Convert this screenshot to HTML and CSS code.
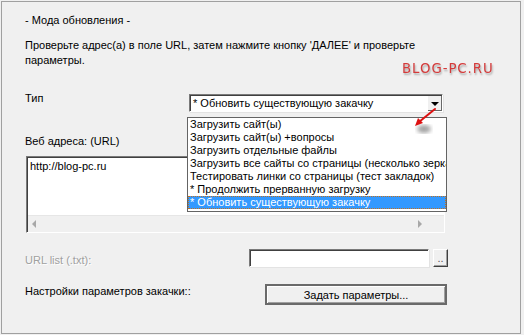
FILE: index.html
```html
<!DOCTYPE html>
<html>
<head>
	<title>Мода обновления</title>
	<link rel="stylesheet" href="styles.css">
</head>
<body>
	<div class="panel">
		<p class="title">- Мода обновления -</p>
		<p class="hint">Проверьте адрес(а) в поле URL, затем нажмите кнопку 'ДАЛЕЕ' и проверьте параметры.</p>

		<div class="row row-type">
			<span class="label">Тип</span>
			<div class="combo">
				<span class="combo-value">* Обновить существующую закачку</span>
				<span class="combo-btn"></span>
			</div>
		</div>

		<p class="label label-url">Веб адреса: (URL)</p>
		<div class="urls">
			<div class="urls-text">http://blog-pc.ru</div>
			<div class="hscroll">
				<span class="arr arr-left"></span>
				<span class="arr arr-right"></span>
			</div>
		</div>

		<div class="row row-list">
			<span class="label disabled">URL list (.txt):</span>
			<div class="field"></div>
			<button class="browse">..</button>
		</div>

		<div class="row row-settings">
			<span class="label">Настройки параметров закачки::</span>
			<button class="settings">Задать параметры...</button>
		</div>

		<!-- open dropdown of the combo -->
		<ul class="dropdown">
			<li>Загрузить сайт(ы)</li>
			<li>Загрузить сайт(ы) +вопросы</li>
			<li>Загрузить отдельные файлы</li>
			<li>Загрузить все сайты со страницы (несколько зеркал)</li>
			<li>Тестировать линки со страницы (тест закладок)</li>
			<li>* Продолжить прерванную загрузку</li>
			<li class="selected">* Обновить существующую закачку</li>
		</ul>

		<div class="watermark">BLOG-PC.RU</div>

		<svg class="pointer" width="40" height="34" viewBox="0 0 40 34">
			<defs>
				<filter id="blur"><feGaussianBlur stdDeviation="2.2"/></filter>
			</defs>
			<ellipse cx="14" cy="24" rx="7" ry="4" fill="#555" opacity=".55" filter="url(#blur)"/>
			<line x1="25" y1="4" x2="9" y2="17" stroke="#d11" stroke-width="2" stroke-linecap="round"/>
			<polygon points="5,21 8,13 13,18" fill="#d11"/>
		</svg>
	</div>
</body>
</html>
```

FILE: styles.css
```css
body {
	margin: 0;
	padding: 0;
	font-family: 'Liberation Sans', Arial, sans-serif;
	font-size: 11px;
	line-height: 13px;
	color: black;
	background-color: #f0f0f0;
}
p {
	margin: 0;
}
.panel {
	position: relative;
	box-sizing: border-box;
	margin: 1px 0 0 1px;
	padding: 12px 0 0 23px;
	width: 520px;
	height: 333px;
	border: 1px solid #a0a0a0;
}
.title {
	height: 13px;
}
.hint {
	margin-top: 11px;
	width: 400px;
	line-height: 15px;
}
.row {
	display: flex;
}
.row-type {
	margin-top: 26px;
	align-items: flex-start;
}
.row-type .label {
	width: 164px;
	margin-top: -2px;
}
.combo {
	position: relative;
	box-sizing: border-box;
	width: 254px;
	height: 18px;
	background: white;
	border: 1px solid;
	border-color: #7a7a7a #ffffff #ffffff #7a7a7a;
	box-shadow: inset 1px 1px 0 #404040, 1px 1px 0 #e3e3e3;
}
.combo-value {
	display: block;
	padding: 2px 0 0 3px;
}
.combo-btn {
	position: absolute;
	top: 1px;
	right: 0;
	width: 14px;
	height: 15px;
	background: #f0f0f0;
	border-left: 1px solid #fff;
	box-shadow: inset -1px -1px 0 #696969;
}
.combo-btn:after {
	content: "";
	position: absolute;
	left: 3px;
	top: 6px;
	border-left: 4px solid transparent;
	border-right: 4px solid transparent;
	border-top: 4px solid black;
}
.label-url {
	margin-top: 23px;
	height: 13px;
}
.urls {
	position: relative;
	box-sizing: border-box;
	margin: 8px 0 0 1px;
	width: 419px;
	height: 77px;
	background: white;
	border: 1px solid;
	border-color: #7a7a7a #ffffff #ffffff #7a7a7a;
	box-shadow: inset 1px 1px 0 #404040;
}
.urls-text {
	padding: 3px 0 0 3px;
}
.hscroll {
	position: absolute;
	left: 1px;
	right: 0;
	bottom: 0;
	height: 16px;
	background: #f0f0f0;
	border-top: 1px solid #e6e6e6;
}
.arr {
	position: absolute;
	top: 4px;
	border-top: 4px solid transparent;
	border-bottom: 4px solid transparent;
}
.arr-left {
	left: 4px;
	border-right: 4px solid #a8a8a8;
}
.arr-right {
	right: 22px;
	border-left: 4px solid #a8a8a8;
}
.row-list {
	margin-top: 16px;
	align-items: center;
}
.row-list .label {
	width: 224px;
	padding-top: 4px;
}
.disabled {
	color: #a0a0a0;
	text-shadow: 1px 1px 0 #fff;
}
.field {
	box-sizing: border-box;
	width: 180px;
	height: 18px;
	background: white;
	border: 1px solid;
	border-color: #7a7a7a #ffffff #ffffff #7a7a7a;
	box-shadow: inset 1px 1px 0 #404040, 1px 1px 0 #e3e3e3;
}
button {
	box-sizing: border-box;
	padding: 0;
	font-family: inherit;
	font-size: 11px;
	color: black;
	background: #f0f0f0;
	border: 1px solid;
	border-color: #fff #404040 #404040 #fff;
	box-shadow: inset -1px -1px 0 #a0a0a0;
	-webkit-appearance: none;
	appearance: none;
}
.browse {
	margin-left: 4px;
	width: 15px;
	height: 18px;
	line-height: 10px;
	color: #555;
}
.row-settings {
	margin-top: 17px;
	align-items: flex-start;
}
.row-settings .label {
	width: 240px;
	padding-top: 1px;
}
.settings {
	width: 182px;
	height: 21px;
	border: 2px solid #6a6a6a;
	box-shadow: inset 1px 1px 0 #fff, inset -1px -1px 0 #a0a0a0;
}
.dropdown {
	position: absolute;
	left: 185px;
	top: 115px;
	margin: 0;
	padding: 0;
	width: 258px;
	height: 93px;
	overflow: hidden;
	list-style: none;
	background: white;
	border: 1px solid #646464;
	white-space: nowrap;
}
.dropdown li {
	box-sizing: border-box;
	height: 13px;
	padding-left: 2px;
}
.dropdown .selected {
	color: white;
	background: #3399ff;
	outline: 1px dotted #c07020;
	outline-offset: -1px;
}
.watermark {
	position: absolute;
	left: 400px;
	top: 60px;
	font-family: 'DejaVu Sans', sans-serif;
	font-size: 14px;
	letter-spacing: 1px;
	color: #d43a3a;
	text-shadow: 1px 2px 2px rgba(0,0,0,.3);
	transform: scaleX(.95);
	transform-origin: left;
}
.pointer {
	position: absolute;
	left: 408px;
	top: 103px;
}
```
